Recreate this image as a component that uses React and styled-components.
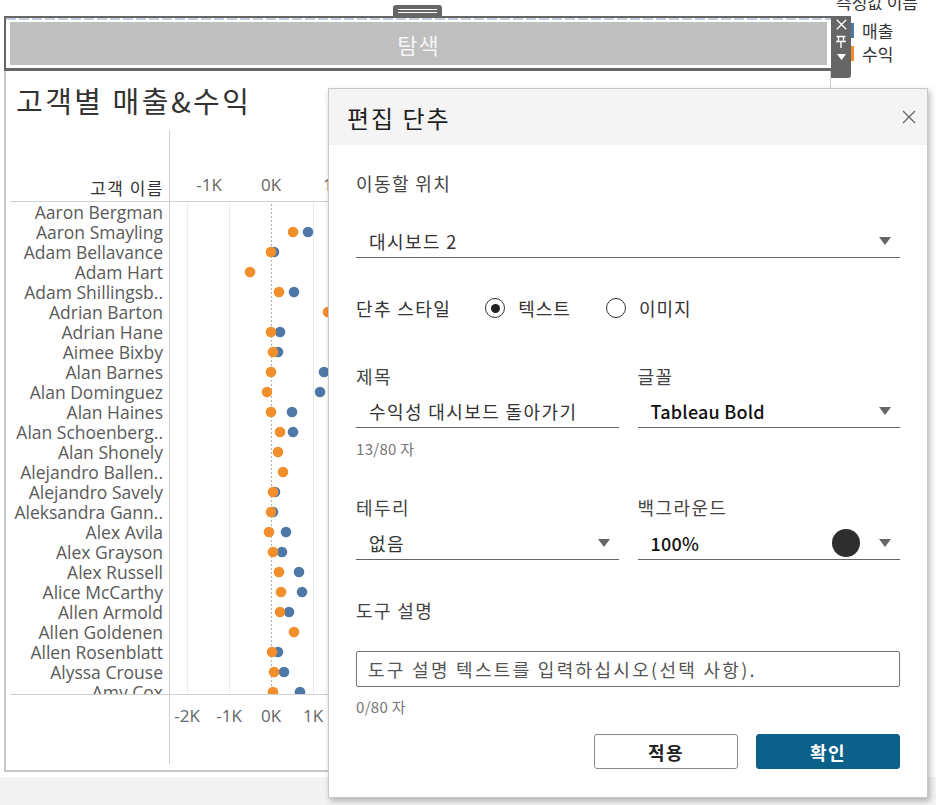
import React from 'react';
import styled, { createGlobalStyle } from 'styled-components';

const KR = `"Noto Sans CJK KR", "Noto Sans", sans-serif`;
const LATIN = `"Open Sans", "Noto Sans CJK KR", sans-serif`;

const ORANGE = '#f28e2b';
const BLUE = '#4e79a7';

// page x of each dot (orange = 수익, blue = 매출); plot starts at x 171
const PLOT_LEFT = 171;
const ROWS = [
  ['Aaron Bergman', null, null],
  ['Aaron Smayling', 294, 309],
  ['Adam Bellavance', 272, 275],
  ['Adam Hart', 251, null],
  ['Adam Shillingsb..', 280, 295],
  ['Adrian Barton', 329, 362],
  ['Adrian Hane', 272, 281],
  ['Aimee Bixby', 274, 279],
  ['Alan Barnes', 272, 325],
  ['Alan Dominguez', 268, 321],
  ['Alan Haines', 272, 293],
  ['Alan Schoenberg..', 281, 294],
  ['Alan Shonely', 279, null],
  ['Alejandro Ballen..', 284, null],
  ['Alejandro Savely', 274, 276],
  ['Aleksandra Gann..', 272, 274],
  ['Alex Avila', 270, 287],
  ['Alex Grayson', 274, 283],
  ['Alex Russell', 280, 300],
  ['Alice McCarthy', 282, 303],
  ['Allen Armold', 281, 290],
  ['Allen Goldenen', 295, null],
  ['Allen Rosenblatt', 273, 279],
  ['Alyssa Crouse', 275, 285],
  ['Amy Cox', 274, 301],
];

const TOP_TICKS = [['-1K', 39], ['0K', 101], ['1K', 163], ['2K', 225], ['3K', 287]];
const BOTTOM_TICKS = [['-2K', 17], ['-1K', 59], ['0K', 101], ['1K', 143], ['2K', 185], ['3K', 227]];

const GlobalStyle = createGlobalStyle`
  html, body {
    margin: 0;
    padding: 0;
    background: #fff;
  }
  body {
    width: 936px;
    height: 805px;
    overflow: hidden;
    font-family: ${KR};
  }
  * {
    box-sizing: border-box;
  }
`;

const Page = styled.div`
  position: relative;
  width: 936px;
  height: 805px;
  display: flex;
  flex-direction: column;
`;

const Canvas = styled.div`
  display: flex;
  align-items: flex-start;
  height: 777px;
`;

const Main = styled.div`
  width: 827px;
  margin: 16px 0 0 4px;
  display: flex;
  flex-direction: column;
`;

const ButtonZone = styled.div`
  position: relative;
  height: 55px;
  border-top: 2px solid #666;
  border-left: 2px solid #666;
  border-bottom: 3px solid #666;
  display: flex;
  flex-direction: column;
`;

const Handle = styled.div`
  position: absolute;
  top: -13px;
  left: 387px;
  width: 49px;
  height: 12px;
  background: #666;
  border-radius: 3px 3px 0 0;
  display: flex;
  flex-direction: column;
  justify-content: center;
  gap: 2px;
  padding: 0 5px;

  &::before,
  &::after {
    content: '';
    height: 1px;
    background: #fff;
  }
`;

const DashedEdge = styled.div`
  height: 2px;
  background: repeating-linear-gradient(90deg, #c3cde0 0 10px, transparent 10px 13px);
`;

const NavButton = styled.div`
  margin: 2px 4px 0 4px;
  height: 43px;
  background: #bfbfbf;
  display: flex;
  align-items: center;
  justify-content: center;
  color: #f4f4f4;
  font-size: 22px;
  letter-spacing: 1px;
`;

const ZoneControls = styled.div`
  position: absolute;
  top: -2px;
  right: -20px;
  width: 20px;
  height: 62px;
  background: #666;
  border-radius: 0 0 3px 0;
  display: flex;
  flex-direction: column;
  align-items: center;
  padding-top: 3px;
  gap: 5px;
`;

const Sheet = styled.div`
  height: 701px;
  border-left: 2px solid #c8c8c8;
  border-right: 1px solid #d0d0d0;
  border-bottom: 2px solid #c8c8c8;
  display: flex;
  flex-direction: column;
`;

const Title = styled.div`
  padding: 11px 0 0 10px;
  height: 47px;
  font-size: 29px;
  line-height: 36px;
  letter-spacing: 2.5px;
  color: #333;
  white-space: nowrap;
`;

const ChartGrid = styled.div`
  margin: 12px 0 0 4px;
  display: grid;
  grid-template-columns: 160px 1fr;
  grid-template-rows: 72px 492px 70px;
  font-family: ${LATIN};
`;

const HeaderLabel = styled.div`
  border-right: 1px solid #d0d0d0;
  border-bottom: 1px solid #d0d0d0;
  display: flex;
  align-items: flex-end;
  justify-content: flex-end;
  padding: 0 5px 2px 0;
  font-family: ${KR};
  font-size: 17px;
  letter-spacing: 1.5px;
  line-height: 22px;
  color: #333;
`;

const AxisCell = styled.div`
  border-${(p) => p.$edge}: 1px solid #d0d0d0;
  overflow: hidden;
`;

const NameList = styled.div`
  border-right: 1px solid #d0d0d0;
  overflow: hidden;
  display: flex;
  flex-direction: column;
  align-items: flex-end;
  padding-right: 6px;
`;

const Name = styled.div`
  height: 20px;
  line-height: 20px;
  font-size: 17.5px;
  color: #5a5a5a;
  white-space: nowrap;
`;

const BlankCell = styled.div`
  border-right: 1px solid #d0d0d0;
  border-top: 1px solid #d0d0d0;
`;

const PlotCell = styled.div`
  overflow: hidden;
`;

const Footer = styled.div`
  flex: 1;
  background: #f3f3f3;
`;

const Legend = styled.div`
  margin: -8px 0 0 5px;
  display: flex;
  flex-direction: column;
`;

const LegendTitle = styled.div`
  font-size: 17px;
  line-height: 20px;
  color: #333;
  white-space: nowrap;
  margin-bottom: 7px;
`;

const LegendItem = styled.div`
  display: flex;
  align-items: center;
  gap: 8px;
  margin-left: 15px;
  height: 23px;
  font-size: 17px;
  color: #333;
`;

const LegendBar = styled.span`
  width: 3px;
  height: 15px;
  background: ${(p) => p.$color};
`;

/* ---------- dialog ---------- */

const Dialog = styled.div`
  position: absolute;
  left: 328px;
  top: 88px;
  width: 600px;
  height: 710px;
  background: #fff;
  border: 1px solid #c8c8c8;
  box-shadow: 2px 3px 6px rgba(0, 0, 0, 0.28);
  display: flex;
  flex-direction: column;
  letter-spacing: 1.4px;
`;

const DialogHeader = styled.div`
  height: 56px;
  background: #f4f4f4;
  display: flex;
  align-items: center;
  justify-content: space-between;
  padding: 0 11px 0 18px;
`;

const DialogTitle = styled.div`
  font-size: 24px;
  font-weight: 400;
  color: #1e1e1e;
  letter-spacing: 2px;
`;

const DialogBody = styled.div`
  padding: 25px 27px 0 27px;
  display: flex;
  flex-direction: column;
`;

const Label = styled.div`
  font-size: 18px;
  line-height: 26px;
  color: #444;
  margin-top: ${(p) => p.$gap || 0}px;
  white-space: nowrap;
`;

const TwoCols = styled.div`
  display: grid;
  grid-template-columns: 1fr 1fr;
  column-gap: 19px;
  margin-top: ${(p) => p.$gap || 0}px;
`;

const Field = styled.div`
  height: 34px;
  margin-top: ${(p) => p.$gap || 0}px;
  border-bottom: 1px solid #666;
  display: flex;
  align-items: center;
  padding: 0 9px 0 13px;
  font-size: 18px;
  color: #222;
  white-space: nowrap;
`;

const FieldText = styled.span`
  flex: 1;
  font-weight: ${(p) => (p.$bold ? 500 : 400)};
  color: ${(p) => (p.$bold ? '#111' : '#333')};
  letter-spacing: ${(p) => (p.$bold ? '0.2px' : 'inherit')};
`;

const Caret = styled.span`
  width: 0;
  height: 0;
  border-left: 6px solid transparent;
  border-right: 6px solid transparent;
  border-top: 8px solid #666;
`;

const Swatch = styled.span`
  width: 28px;
  height: 28px;
  border-radius: 50%;
  background: #2e2e2e;
  margin-right: 19px;
`;

const Count = styled.div`
  font-size: 15px;
  line-height: 20px;
  letter-spacing: 0.3px;
  color: #777;
  margin-top: ${(p) => p.$gap || 0}px;
`;

const RadioRow = styled.div`
  display: flex;
  align-items: center;
  margin-top: 37px;
  height: 26px;
  font-size: 18px;
  color: #333;
`;

const RadioOption = styled.div`
  display: flex;
  align-items: center;
  gap: 13px;
  margin-left: ${(p) => p.$offset}px;
  white-space: nowrap;
  letter-spacing: 1px;
`;

const RadioCircle = styled.span`
  width: 20px;
  height: 20px;
  border-radius: 50%;
  border: 1.5px solid #333;
  display: flex;
  align-items: center;
  justify-content: center;

  &::after {
    content: '';
    width: 9px;
    height: 9px;
    border-radius: 50%;
    background: ${(p) => (p.$checked ? '#222' : 'transparent')};
  }
`;

const TextBox = styled.div`
  height: 36px;
  margin-top: 28px;
  border: 1px solid #777;
  border-radius: 2px;
  padding: 0 11px;
  display: flex;
  align-items: center;
  font-size: 18px;
  letter-spacing: 2.3px;
  color: #555;
  white-space: nowrap;
`;

const Actions = styled.div`
  display: flex;
  justify-content: flex-end;
  gap: 18px;
  margin-top: 17px;
`;

const ActionButton = styled.div`
  width: 144px;
  height: 35px;
  border-radius: 3px;
  display: flex;
  align-items: center;
  justify-content: center;
  font-size: 18px;
  font-weight: 700;
  border: 1px solid ${(p) => (p.$primary ? '#0b6189' : '#8a8a8a')};
  background: ${(p) => (p.$primary ? '#0b6189' : '#fff')};
  color: ${(p) => (p.$primary ? '#fff' : '#222')};
`;

const CloseIcon = ({ size = 14, color = '#666', width = 1.3 }) => (
  <svg width={size} height={size} viewBox="0 0 14 14">
    <path d="M1 1L13 13M13 1L1 13" stroke={color} strokeWidth={width} />
  </svg>
);

const PinIcon = () => (
  <svg width="12" height="14" viewBox="0 0 12 14">
    <path
      d="M1.5 1.5h9 M3.5 1.5v5 M8.5 1.5v5 M1 6.5h10 M6 6.5v6.5"
      stroke="#fff"
      strokeWidth="1.4"
      fill="none"
    />
  </svg>
);

const SmallCaret = () => (
  <svg width="9" height="6" viewBox="0 0 9 6">
    <path d="M0 0h9L4.5 6z" fill="#fff" />
  </svg>
);

const gridXs = [];
for (let x = 17; x < 660; x += 42) gridXs.push(x);

const PlotBody = () => (
  <svg width="660" height="492">
    {gridXs.map((x) =>
      x === 101 ? null : (
        <line key={x} x1={x + 0.5} x2={x + 0.5} y1="0" y2="492" stroke="#ececec" />
      ),
    )}
    <line x1="101.5" x2="101.5" y1="2" y2="492" stroke="#b0b0b0" strokeDasharray="2 2" />
    {ROWS.map(([name, orange, blue], i) => {
      const cy = 10 + i * 20;
      return (
        <g key={name}>
          {blue != null && <circle cx={blue - PLOT_LEFT} cy={cy} r="5.3" fill={BLUE} />}
          {orange != null && <circle cx={orange - PLOT_LEFT} cy={cy} r="5.3" fill={ORANGE} />}
        </g>
      );
    })}
  </svg>
);

const AxisLabels = ({ ticks, y }) => (
  <svg width="660" height="70">
    {ticks.map(([label, x]) => (
      <text
        key={label}
        x={x}
        y={y}
        textAnchor="middle"
        dominantBaseline="central"
        fontFamily='"Open Sans", sans-serif'
        fontSize="17"
        fill="#666"
      >
        {label}
      </text>
    ))}
  </svg>
);

const App = () => (
  <Page>
    <GlobalStyle />
    <Canvas>
      <Main>
        <ButtonZone>
          <Handle />
          <DashedEdge />
          <NavButton>탐색</NavButton>
          <ZoneControls>
            <CloseIcon size={11} color="#fff" width={1.6} />
            <PinIcon />
            <SmallCaret />
          </ZoneControls>
        </ButtonZone>
        <Sheet>
          <Title>고객별 매출&amp;수익</Title>
          <ChartGrid>
            <HeaderLabel>고객 이름</HeaderLabel>
            <AxisCell $edge="bottom">
              <AxisLabels ticks={TOP_TICKS} y={54} />
            </AxisCell>
            <NameList>
              {ROWS.map(([name]) => (
                <Name key={name}>{name}</Name>
              ))}
            </NameList>
            <PlotCell>
              <PlotBody />
            </PlotCell>
            <BlankCell />
            <AxisCell $edge="top">
              <AxisLabels ticks={BOTTOM_TICKS} y={20} />
            </AxisCell>
          </ChartGrid>
        </Sheet>
      </Main>
      <Legend>
        <LegendTitle>측정값 이름</LegendTitle>
        <LegendItem>
          <LegendBar $color={BLUE} />
          매출
        </LegendItem>
        <LegendItem>
          <LegendBar $color={ORANGE} />
          수익
        </LegendItem>
      </Legend>
    </Canvas>
    <Footer />

    <Dialog>
      <DialogHeader>
        <DialogTitle>편집 단추</DialogTitle>
        <CloseIcon />
      </DialogHeader>
      <DialogBody>
        <Label>이동할 위치</Label>
        <Field $gap={28}>
          <FieldText>대시보드 2</FieldText>
          <Caret />
        </Field>

        <RadioRow>
          <span>단추 스타일</span>
          <RadioOption $offset={34}>
            <RadioCircle $checked />
            텍스트
          </RadioOption>
          <RadioOption $offset={35}>
            <RadioCircle />
            이미지
          </RadioOption>
        </RadioRow>

        <TwoCols $gap={42}>
          <div>
            <Label>제목</Label>
            <Field $gap={5}>
              <FieldText>수익성 대시보드 돌아가기</FieldText>
            </Field>
          </div>
          <div>
            <Label>글꼴</Label>
            <Field $gap={5}>
              <FieldText $bold>Tableau Bold</FieldText>
              <Caret />
            </Field>
          </div>
        </TwoCols>
        <Count $gap={11}>13/80 자</Count>

        <TwoCols $gap={35}>
          <div>
            <Label>테두리</Label>
            <Field $gap={6}>
              <FieldText>없음</FieldText>
              <Caret />
            </Field>
          </div>
          <div>
            <Label>백그라운드</Label>
            <Field $gap={6}>
              <FieldText $bold>100%</FieldText>
              <Swatch />
              <Caret />
            </Field>
          </div>
        </TwoCols>

        <Label $gap={37}>도구 설명</Label>
        <TextBox>도구 설명 텍스트를 입력하십시오(선택 사항).</TextBox>
        <Count $gap={10}>0/80 자</Count>

        <Actions>
          <ActionButton>적용</ActionButton>
          <ActionButton $primary>확인</ActionButton>
        </Actions>
      </DialogBody>
    </Dialog>
  </Page>
);

export default App;
